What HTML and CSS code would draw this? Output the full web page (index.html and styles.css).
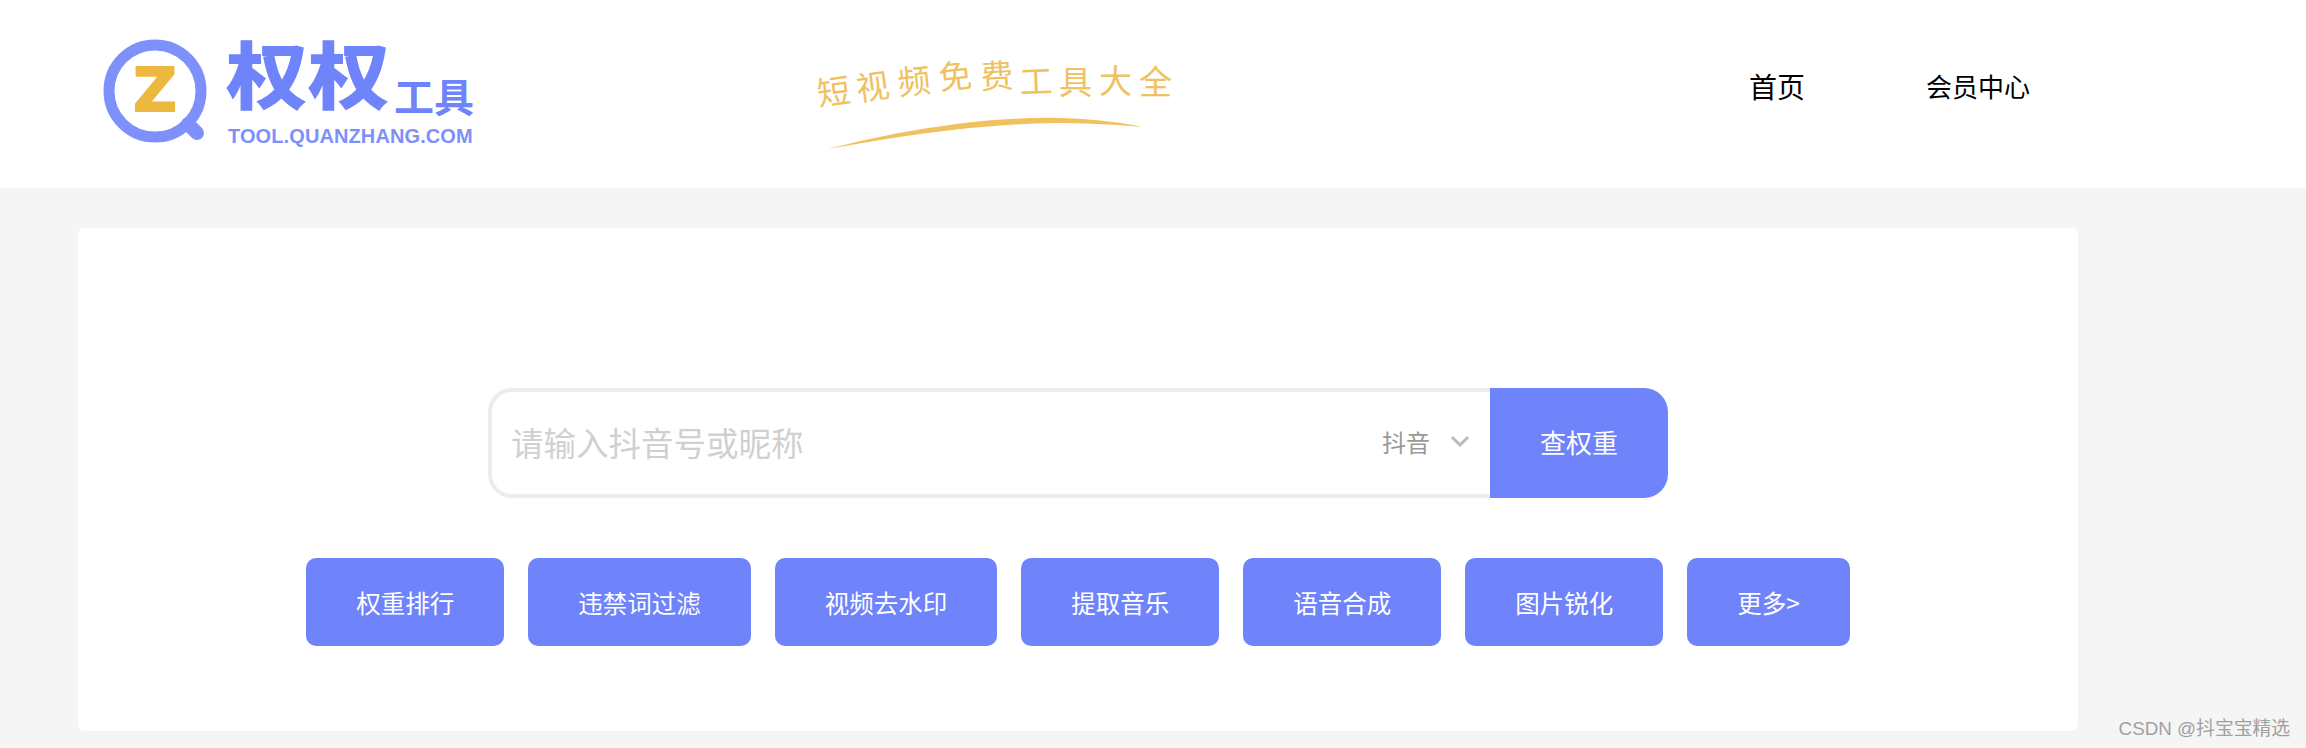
FILE: index.html
```html
<!DOCTYPE html>
<html lang="zh-CN">

<head>
    <meta charset="UTF-8">
    <title>权权工具</title>
    <link rel="stylesheet" href="styles.css">
</head>

<body>

    <header class="header">
        <!-- logo -->
        <svg class="logo" width="420" height="140" viewBox="0 0 420 140">
            <circle class="logo-ring" cx="75" cy="71" r="46"></circle>
            <line class="logo-handle" x1="108" y1="104" x2="117" y2="113"></line>
            <text class="logo-z" x="75" y="91">Z</text>
            <text class="logo-name" transform="translate(146 82.5) scale(1 0.88)">权权</text>
            <text class="logo-tool" x="314" y="92">工具</text>
            <text class="logo-url" x="148" y="123">TOOL.QUANZHANG.COM</text>
        </svg>

        <!-- slogan -->
        <svg class="slogan" width="420" height="130" viewBox="0 0 420 130">
            <text class="slogan-text" x="29 68 109 150 191 230 269 309 349" y="66 61 55 50 49 54 54 53 54"
                rotate="-8 -8 -6 -6 -3 -2 0 0 0">短视频免费工具大全</text>
            <path class="slogan-line" d="M38 109 C110 90 200 76 270 78 C305 79 335 83 352 87 C320 84 290 83 265 83 C190 84 110 96 38 109 Z"></path>
        </svg>

        <nav class="nav">
            <a class="nav-home" href="#">首页</a>
            <a class="nav-member" href="#">会员中心</a>
        </nav>
    </header>

    <main class="card">
        <div class="search">
            <div class="search-box">
                <input class="search-input" type="text" placeholder="请输入抖音号或昵称">
                <div class="search-type">
                    <span>抖音</span>
                    <svg width="20" height="12" viewBox="0 0 20 12">
                        <path class="chevron" d="M2 2 L10 10 L18 2"></path>
                    </svg>
                </div>
            </div>
            <button class="search-btn">查权重</button>
        </div>

        <div class="tools">
            <a class="tool" href="#">权重排行</a>
            <a class="tool" href="#">违禁词过滤</a>
            <a class="tool" href="#">视频去水印</a>
            <a class="tool" href="#">提取音乐</a>
            <a class="tool" href="#">语音合成</a>
            <a class="tool" href="#">图片锐化</a>
            <a class="tool" href="#">更多&gt;</a>
        </div>
    </main>

    <div class="watermark">CSDN @抖宝宝精选</div>

</body>

</html>
```

FILE: styles.css
```css
* {
    box-sizing: border-box;
}

html,
body {
    margin: 0;
    height: 748px;
    overflow: hidden;
}

body {
    position: relative;
    background-color: #f5f5f5;
    font-family: "Liberation Sans", "Noto Sans CJK SC", sans-serif;
}

a {
    text-decoration: none;
}

/* header */
.header {
    display: flex;
    align-items: flex-start;
    height: 188px;
    padding: 20px 0 0 80px;
    background-color: #fff;
}

.logo {
    flex: none;
    overflow: visible;
}

.logo-ring {
    fill: none;
    stroke: #7d90fb;
    stroke-width: 11;
}

.logo-handle {
    stroke: #7d90fb;
    stroke-width: 14;
    stroke-linecap: round;
}

.logo-z {
    fill: #ecb83f;
    stroke: #ecb83f;
    stroke-width: 2;
    font-family: "DejaVu Sans", sans-serif;
    font-size: 60px;
    font-weight: 700;
    text-anchor: middle;
}

.logo-name {
    fill: #6f83fb;
    font-family: "Noto Sans CJK SC", sans-serif;
    font-size: 82px;
    font-weight: 900;
}

.logo-tool {
    fill: #6f83fb;
    font-family: "Noto Sans CJK SC", sans-serif;
    font-size: 40px;
    font-weight: 700;
}

.logo-url {
    fill: #7d90fb;
    font-size: 20px;
    font-weight: 700;
    letter-spacing: 0.1px;
}

.slogan {
    flex: none;
    margin: 20px 0 0 290px;
}

.slogan-text {
    fill: #efc15f;
    font-family: "Noto Sans CJK SC", sans-serif;
    font-size: 33px;
}

.slogan-line {
    fill: #efc15f;
}

.nav {
    display: flex;
    align-items: center;
    gap: 121px;
    margin: 47px 0 0 539px;
    line-height: 38px;
}

.nav a {
    color: #000;
    font-family: "Noto Sans CJK SC", sans-serif;
}

.nav-home {
    font-size: 28px;
}

.nav-member {
    font-size: 26px;
}

/* card */
.card {
    display: flex;
    flex-direction: column;
    align-items: center;
    gap: 60px;
    width: 2000px;
    height: 503px;
    margin: 40px 0 0 78px;
    padding-top: 160px;
    background-color: #fff;
    border-radius: 6px;
}

.search {
    display: flex;
    width: 1180px;
    height: 110px;
}

.search-box {
    flex: 1;
    display: flex;
    align-items: center;
    padding: 0 20px 0 19px;
    border: 4px solid #ececec;
    border-right: none;
    border-radius: 24px 0 0 24px;
}

.search-input {
    flex: 1;
    min-width: 0;
    padding: 0 0 3px;
    border: none;
    outline: none;
    font-family: "Noto Sans CJK SC", sans-serif;
    font-size: 32.5px;
}

.search-input::placeholder {
    color: #d0d0d0;
}

.search-type {
    display: flex;
    align-items: center;
    gap: 20px;
    padding-bottom: 4px;
    color: #999;
    font-family: "Noto Sans CJK SC", sans-serif;
    font-size: 24px;
}

.chevron {
    fill: none;
    stroke: #bbb;
    stroke-width: 3;
}

.search-btn {
    width: 178px;
    padding: 0 0 4px;
    border: none;
    border-radius: 0 24px 24px 0;
    background-color: #6f83fb;
    color: #fff;
    font-family: "Noto Sans CJK SC", sans-serif;
    font-size: 26px;
}

.tools {
    display: flex;
    gap: 24px;
}

.tool {
    display: flex;
    align-items: center;
    height: 88px;
    padding: 0 50px;
    border-radius: 10px;
    background-color: #6f83fb;
    color: #fff;
    font-family: "Noto Sans CJK SC", sans-serif;
    font-size: 24.5px;
}

/* csdn watermark */
.watermark {
    position: absolute;
    right: 16px;
    bottom: 7px;
    color: #a0a0a0;
    font-size: 18.8px;
    line-height: 24px;
}
```
